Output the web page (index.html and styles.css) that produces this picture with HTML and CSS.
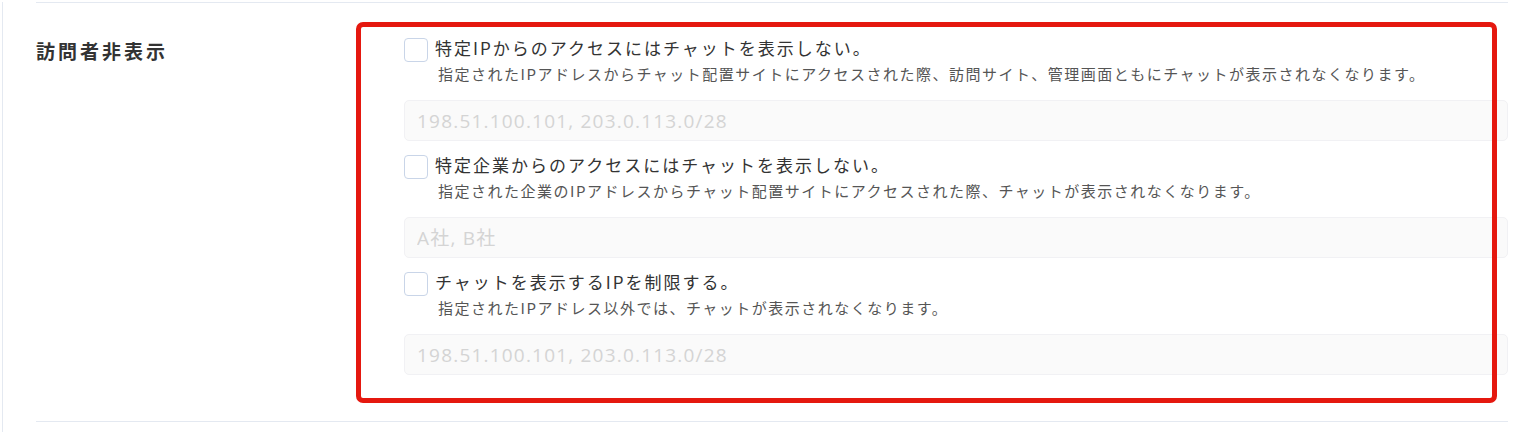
FILE: index.html
```html
<!DOCTYPE html>
<html lang="ja">
<head>
    <meta charset="UTF-8">
    <meta name="viewport" content="width=device-width, initial-scale=1.0">
    <title>訪問者非表示</title>
    <link rel="stylesheet" href="styles.css">
</head>
<body>
    <div class="frame">
        <div class="setting-row">
            <div class="setting-label">訪問者非表示</div>
            <div class="setting-options">
                <div class="option">
                    <label class="option-head">
                        <span class="checkbox"></span>
                        <span class="option-title">特定IPからのアクセスにはチャットを表示しない。</span>
                    </label>
                    <p class="option-desc">指定されたIPアドレスからチャット配置サイトにアクセスされた際、訪問サイト、管理画面ともにチャットが表示されなくなります。</p>
                    <input class="option-input" type="text" placeholder="198.51.100.101, 203.0.113.0/28" disabled>
                </div>
                <div class="option">
                    <label class="option-head">
                        <span class="checkbox"></span>
                        <span class="option-title">特定企業からのアクセスにはチャットを表示しない。</span>
                    </label>
                    <p class="option-desc">指定された企業のIPアドレスからチャット配置サイトにアクセスされた際、チャットが表示されなくなります。</p>
                    <input class="option-input" type="text" placeholder="A社, B社" disabled>
                </div>
                <div class="option">
                    <label class="option-head">
                        <span class="checkbox"></span>
                        <span class="option-title">チャットを表示するIPを制限する。</span>
                    </label>
                    <p class="option-desc">指定されたIPアドレス以外では、チャットが表示されなくなります。</p>
                    <input class="option-input" type="text" placeholder="198.51.100.101, 203.0.113.0/28" disabled>
                </div>
                <!-- annotation frame drawn over the options -->
                <div class="highlight"></div>
            </div>
        </div>
    </div>
</body>
</html>
```

FILE: styles.css
```css
body {
    margin: 0;
    background-color: #fff;
    font-family: "Noto Sans CJK JP", "Noto Sans", sans-serif;
    color: #333;
}
.frame {
    margin-left: 2px;
    height: 100vh;
    border-left: 1px solid #e4e9f1;
    box-sizing: border-box;
}
.setting-row {
    display: grid;
    grid-template-columns: 368px 1fr;
    width: 1472px;
    margin: 2px 0 0 33px;
    padding: 35px 0 46px;
    border-top: 1px solid #e4e9f1;
    border-bottom: 1px solid #e4e9f1;
}
.setting-label {
    font-size: 19px;
    font-weight: bold;
    letter-spacing: 3px;
    line-height: 24px;
    padding-top: 1px;
    color: #333;
}
.setting-options {
    position: relative;
    display: flex;
    flex-direction: column;
    gap: 14px;
}
.option {
    display: flex;
    flex-direction: column;
}
.option-head {
    display: flex;
    align-items: center;
    gap: 7px;
    height: 24px;
}
.checkbox {
    width: 22px;
    height: 22px;
    border: 1px solid #c9d5e8;
    border-radius: 4px;
    flex-shrink: 0;
}
.option-title {
    font-size: 17px;
    letter-spacing: 2px;
    line-height: 24px;
    margin-top: -4px;
}
.option-desc {
    margin: 0 0 0 34px;
    font-size: 15px;
    letter-spacing: 1.5px;
    line-height: 24px;
    color: #555;
}
.option-input {
    margin-top: 14px;
    height: 41px;
    box-sizing: border-box;
    padding: 0 12px;
    border: 1px solid #f1f1f4;
    border-radius: 5px;
    background-color: #fafafa;
    font-family: "Open Sans", "Noto Sans CJK JP", sans-serif;
    font-size: 19px;
    letter-spacing: 1.2px;
}
.option-input::placeholder {
    color: #d4d4d4;
}
.highlight {
    position: absolute;
    top: -16px;
    left: -48px;
    right: 11px;
    bottom: -28px;
    border: 5px solid #e5180f;
    border-radius: 7px;
    pointer-events: none;
}
```
